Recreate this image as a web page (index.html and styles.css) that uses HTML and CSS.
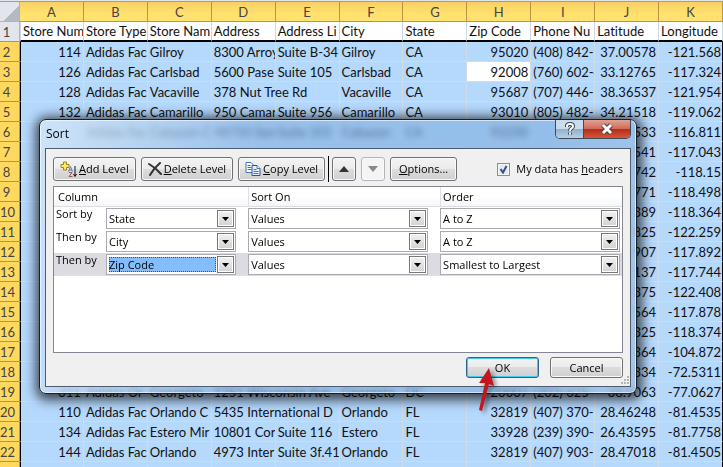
FILE: index.html
```html
<!DOCTYPE html>
<html lang="en">
<head>
    <meta charset="UTF-8">
    <meta name="viewport" content="width=device-width, initial-scale=1.0">
    <title>Sort</title>
    <link rel="stylesheet" href="styles.css">
</head>
<body>
    <table class="sheet">
        <thead>
            <tr>
                <th class="corner"></th>
                <th>A</th><th>B</th><th>C</th><th>D</th><th>E</th><th>F</th><th>G</th><th>H</th><th>I</th><th>J</th><th>K</th>
            </tr>
        </thead>
        <tbody>
            <tr class="titles"><th>1</th><td>Store Num</td><td>Store Type</td><td>Store Nam</td><td>Address</td><td>Address Li</td><td>City</td><td>State</td><td>Zip Code</td><td>Phone Nu</td><td>Latitude</td><td>Longitude</td></tr>
            <tr><th>2</th><td class="num">114</td><td>Adidas Fac</td><td>Gilroy</td><td>8300 Arroy</td><td>Suite B-34</td><td>Gilroy</td><td>CA</td><td class="num">95020</td><td>(408) 842-9</td><td class="num">37.00578</td><td class="num">-121.568</td></tr>
            <tr><th>3</th><td class="num">126</td><td>Adidas Fac</td><td>Carlsbad</td><td>5600 Pase</td><td>Suite 105</td><td>Carlsbad</td><td>CA</td><td class="num current">92008</td><td>(760) 602-4</td><td class="num">33.12765</td><td class="num">-117.324</td></tr>
            <tr><th>4</th><td class="num">128</td><td>Adidas Fac</td><td>Vacaville</td><td colspan="2">378 Nut Tree Rd</td><td>Vacaville</td><td>CA</td><td class="num">95687</td><td>(707) 446-</td><td class="num">38.36537</td><td class="num">-121.954</td></tr>
            <tr><th>5</th><td class="num">132</td><td>Adidas Fac</td><td>Camarillo</td><td>950 Camar</td><td>Suite 956</td><td>Camarillo</td><td>CA</td><td class="num">93010</td><td>(805) 482-</td><td class="num">34.21518</td><td class="num">-119.062</td></tr>
            <tr><th>6</th><td></td><td>Adidas Fac</td><td>Cabazon C</td><td>48750 Sem</td><td>Suite 101</td><td>Cabazon</td><td>CA</td><td class="num">92230</td><td></td><td class="num">533</td><td class="num">-116.811</td></tr>
            <tr><th>7</th><td colspan="9"></td><td class="num">541</td><td class="num">-117.043</td></tr>
            <tr><th>8</th><td colspan="9"></td><td class="num">742</td><td class="num">-118.15</td></tr>
            <tr><th>9</th><td colspan="9"></td><td class="num">771</td><td class="num">-118.498</td></tr>
            <tr><th>10</th><td colspan="9"></td><td class="num">389</td><td class="num">-118.364</td></tr>
            <tr><th>11</th><td colspan="9"></td><td class="num">825</td><td class="num">-122.259</td></tr>
            <tr><th>12</th><td colspan="9"></td><td class="num">907</td><td class="num">-117.892</td></tr>
            <tr><th>13</th><td colspan="9"></td><td class="num">137</td><td class="num">-117.744</td></tr>
            <tr><th>14</th><td colspan="9"></td><td class="num">375</td><td class="num">-122.408</td></tr>
            <tr><th>15</th><td colspan="9"></td><td class="num">564</td><td class="num">-117.878</td></tr>
            <tr><th>16</th><td colspan="9"></td><td class="num">325</td><td class="num">-118.374</td></tr>
            <tr><th>17</th><td colspan="9"></td><td class="num">364</td><td class="num">-104.872</td></tr>
            <tr><th>18</th><td colspan="9"></td><td class="num">334</td><td class="num">-72.5311</td></tr>
            <tr><th>19</th><td class="num">311</td><td>Adidas Or</td><td>Georgeto</td><td colspan="2">1251 Wisconsin Ave</td><td>Georgeto</td><td>DC</td><td class="num">20007</td><td>(202) 625-</td><td class="num">38.9063</td><td class="num">-77.0627</td></tr>
            <tr><th>20</th><td class="num">110</td><td>Adidas Fac</td><td>Orlando C</td><td colspan="2">5435 International D</td><td>Orlando</td><td>FL</td><td class="num">32819</td><td>(407) 370-9</td><td class="num">28.46248</td><td class="num">-81.4535</td></tr>
            <tr><th>21</th><td class="num">134</td><td>Adidas Fac</td><td>Estero Mir</td><td>10801 Corl</td><td>Suite 116</td><td>Estero</td><td>FL</td><td class="num">33928</td><td>(239) 390-4</td><td class="num">26.43595</td><td class="num">-81.7758</td></tr>
            <tr><th>22</th><td class="num">144</td><td>Adidas Fac</td><td>Orlando</td><td>4973 Inter</td><td>Suite 3f.41</td><td>Orlando</td><td>FL</td><td class="num">32819</td><td>(407) 903-7</td><td class="num">28.47018</td><td class="num">-81.4505</td></tr>
            <tr><th></th><td></td><td></td><td></td><td></td><td></td><td></td><td></td><td></td><td></td><td></td><td></td></tr>
        </tbody>
    </table>

    <form class="dialog" role="dialog" aria-labelledby="dialog-title">
        <div class="titlebar">
            <span id="dialog-title">Sort</span>
            <div class="window-buttons">
                <button type="button" class="help" aria-label="Help">
                    <svg width="14" height="14" viewBox="0 0 14 14" fill="none">
                        <path d="M4 5V4q0-2 3-2t3 2.200q0 1.300-1.500 2.200T7 9M7 10.500v2" stroke="#3b4654" stroke-width="4"/>
                        <path d="M4 5V4q0-2 3-2t3 2.200q0 1.300-1.500 2.200T7 9M7 10.500v2" stroke="#fff" stroke-width="2"/>
                    </svg>
                </button>
                <button type="button" class="close" aria-label="Close">
                    <svg width="14" height="12" viewBox="0 0 14 12" fill="none">
                        <path d="M3 2l8 8M11 2l-8 8" stroke="#5b3a3c" stroke-width="5"/>
                        <path d="M3 2l8 8M11 2l-8 8" stroke="#fff" stroke-width="3"/>
                    </svg>
                </button>
            </div>
        </div>

        <div class="content">
            <div class="toolbar">
                <button type="button" class="btn">
                    <svg width="17" height="17" viewBox="0 0 17 17" fill="none">
                        <path d="M3.500 1h3v2.500H9v3H6.500V9h-3V6.500H1v-3h2.500z" fill="#ffe95a" stroke="#9a8422"/>
                        <path d="M8.500 10.500l2-5 2 5M9 9h3" stroke="#5a7dbb"/>
                        <path d="M9 11.500h3l-3 4h3.500" stroke="#9a5560"/>
                        <path d="M15 5v10M13.500 13l1.500 2.500 1.500-2.500" stroke="#111"/>
                    </svg>
                    <span><u>A</u>dd Level</span>
                </button>
                <button type="button" class="btn">
                    <svg width="14" height="14" viewBox="0 0 14 14" fill="none" stroke="#333" stroke-linecap="round">
                        <path d="M1 2q7 4 12 10" stroke-width="2"/>
                        <path d="M12 1Q6 6 2 13" stroke-width="2"/>
                    </svg>
                    <span><u>D</u>elete Level</span>
                </button>
                <button type="button" class="btn">
                    <svg width="16" height="14" viewBox="0 0 16 14" fill="#fff" stroke="#4a74b8">
                        <path d="M1 .5h5l2.500 2.500v7.500H1z"/>
                        <path d="M2.500 3.500h3M2.500 5.500h4M2.500 7.500h4"/>
                        <path d="M7 3.500h5l3 3v7H7z" fill="#e6f0ff" stroke="#28549c"/>
                        <path d="M12 3.500v3h3M8.500 7.500h3M8.500 9.500h5M8.500 11.500h5"/>
                    </svg>
                    <span><u>C</u>opy Level</span>
                </button>
                <span class="separator"></span>
                <button type="button" class="btn move" aria-label="Move Up">
                    <svg width="10" height="6" viewBox="0 0 10 6"><path d="M5 0l5 6H0z" fill="#333"/></svg>
                </button>
                <button type="button" class="btn move" aria-label="Move Down" disabled>
                    <svg width="10" height="6" viewBox="0 0 10 6"><path d="M5 6l5-6H0z" fill="#888"/></svg>
                </button>
                <button type="button" class="btn options"><span><u>O</u>ptions...</span></button>
                <label class="headers"><input type="checkbox" checked> <span>My data has <u>h</u>eaders</span></label>
            </div>

            <div class="levels">
                <div class="level-head">
                    <span class="first">Column</span>
                    <span>Sort On</span>
                    <span>Order</span>
                </div>
                <div class="level">
                    <label for="column1">Sort by</label>
                    <div class="combo"><select id="column1"><option>State</option></select></div>
                    <div class="combo"><select aria-label="Sort On"><option>Values</option></select></div>
                    <div class="combo"><select aria-label="Order"><option>A to Z</option></select></div>
                </div>
                <div class="level">
                    <label for="column2">Then by</label>
                    <div class="combo"><select id="column2"><option>City</option></select></div>
                    <div class="combo"><select aria-label="Sort On"><option>Values</option></select></div>
                    <div class="combo"><select aria-label="Order"><option>A to Z</option></select></div>
                </div>
                <div class="level selected">
                    <label for="column3">Then by</label>
                    <div class="combo active"><select id="column3"><option>Zip Code</option></select></div>
                    <div class="combo"><select aria-label="Sort On"><option>Values</option></select></div>
                    <div class="combo"><select aria-label="Order"><option>Smallest to Largest</option></select></div>
                </div>
            </div>

            <div class="footer">
                <button type="submit" class="btn ok">OK
                    <svg class="pointer" width="30" height="50" viewBox="0 0 30 50">
                        <path d="M18 2l5 18-5-2-7 27-3-1 6-27-6 0z" fill="#c4161c"/>
                    </svg>
                </button>
                <button type="button" class="btn">Cancel</button>
            </div>
            <svg class="grip" width="9" height="9" viewBox="0 0 9 9" fill="#b4b4b4">
                <path d="M7 0h2v2H7zM7 3h2v2H7zM7 6h2v2H7zM4 3h2v2H4zM4 6h2v2H4zM1 6h2v2H1z"/>
            </svg>
        </div>
    </form>
</body>
</html>
```

FILE: styles.css
```css
* {
    box-sizing: border-box;
}

body {
    margin: 0;
    padding-top: 1px;
    height: 100vh;
    overflow: hidden;
    position: relative;
    background-color: #e3e7ec;
}

/* spreadsheet */
.sheet {
    width: 100%;
    table-layout: fixed;
    border-collapse: separate;
    border-spacing: 0;
    border-top: 1px solid #9a9da3;
    font-family: Lato, Calibri, sans-serif;
    font-size: 13px;
    font-variant-ligatures: none;
    line-height: 18px;
    color: #111;
}

.sheet th,
.sheet td {
    height: 20px;
    padding: 1px 0 0;
    overflow: hidden;
    white-space: nowrap;
}

.sheet th {
    font-weight: normal;
    color: #444;
    border-right: 1px solid #bf9440;
    border-bottom: 1px solid #bf9440;
}

.sheet thead th {
    background: linear-gradient(#fbd062, #ffe070 60%, #ffe26e);
}

.sheet tbody th {
    background-color: #ffd95f;
    padding-right: 6px;
}

.sheet .corner {
    width: 20px;
    background: linear-gradient(135deg, #e2e6ec 60%, #b5bac2 60%);
    border-color: #b0b4ba;
}

.sheet td {
    background-color: #b5d8fd;
    border-right: 1px solid #cfdce6;
    border-bottom: 1px solid #cfdce6;
    padding-left: 2px;
    text-align: left;
}

.sheet th + td {
    border-left: 1px solid #000;
}

.sheet td:last-child {
    border-right-color: #000;
}

.sheet .titles th {
    background-color: #e2e6ec;
    border-right-color: #b0b4ba;
}

.sheet .titles td {
    background-color: #fff;
    border-right-color: #d0d7e5;
    border-bottom: 2px solid #000;
    line-height: 17px;
}

.sheet .titles th + td {
    border-left-color: #d0d7e5;
}

.sheet .num {
    text-align: right;
    padding: 1px 2px 0 0;
}

.sheet td:last-child.num {
    padding-right: 1px;
}

.sheet .current {
    background-color: #fff;
}

/* dialog */
.dialog {
    position: absolute;
    top: 119px;
    left: 39px;
    right: 86px;
    padding: 0 5px 6px;
    border: 1px solid #17202b;
    border-radius: 7px;
    background: linear-gradient(100deg, rgba(212, 230, 247, 0.8), rgba(131, 177, 226, 0.6) 35%, rgba(125, 172, 222, 0.6) 80%, rgba(160, 195, 230, 0.8));
    backdrop-filter: blur(3px);
    box-shadow: inset 0 0 0 1px rgba(255, 255, 255, 0.6), 1px 2px 12px 4px rgba(0, 0, 0, 0.7);
    font-family: "Open Sans", "Segoe UI", Tahoma, sans-serif;
    font-size: 11px;
    line-height: 14px;
    color: #000;
}

.dialog button,
.dialog select {
    font: inherit;
    color: inherit;
}

.titlebar {
    display: flex;
    justify-content: space-between;
    height: 28px;
    padding-left: 1px;
    font-size: 12px;
    line-height: 27px;
}

.window-buttons {
    display: flex;
    height: 19px;
    border: 1px solid #3f4a58;
    border-top: 0;
    border-radius: 0 0 5px 5px;
    overflow: hidden;
}

.window-buttons button {
    display: flex;
    align-items: center;
    justify-content: center;
    padding: 0;
    border: 0;
}

.help {
    width: 27px;
    background: linear-gradient(#c9dcee 48%, #93aecb 50%, #b7d0e8);
}

.window-buttons .close {
    width: 47px;
    border-left: 1px solid #3f4a58;
    background: linear-gradient(#e1a193, #cf6c5a 48%, #b52b17 50%, #d4573a);
}

.content {
    position: relative;
    padding: 8px 7px;
    border: 1px solid #4e5c6e;
    background-color: #f0f0f0;
}

.toolbar {
    display: flex;
    align-items: center;
    gap: 5px;
    height: 24px;
    margin-bottom: 5px;
}

.btn {
    display: flex;
    align-items: center;
    justify-content: center;
    gap: 2px;
    height: 24px;
    padding: 0 6px;
    border: 1px solid #707070;
    border-radius: 3px;
    background: linear-gradient(#f3f3f3, #ebebeb 48%, #dddddd 50%, #cfcfcf);
    box-shadow: inset 0 0 0 1px #fafafa;
    white-space: nowrap;
}

.btn.move {
    width: 24px;
    padding: 0;
}

.btn.options {
    min-width: 67px;
}

.btn:disabled {
    border-color: #b5b5b5;
    background: #f4f4f4;
}

.separator {
    width: 1px;
    height: 26px;
    margin: 0 -2px;
    background-color: #000;
}

.headers {
    display: flex;
    align-items: center;
    gap: 6px;
    margin-left: auto;
    white-space: nowrap;
}

.headers input {
    appearance: none;
    width: 13px;
    height: 13px;
    margin: 0;
    border: 1px solid #8e8f8f;
    background: #e6e9ee;
    box-shadow: inset 0 0 0 1px #f4f4f4;
}

.headers input:checked {
    background: #e6e9ee url("data:image/svg+xml,%3Csvg xmlns='http://www.w3.org/2000/svg' viewBox='0 0 11 11'%3E%3Cpath d='M2.500 5l2.500 3.500L8.500 2' fill='none' stroke='%23354f91' stroke-width='2'/%3E%3C/svg%3E") center / 11px no-repeat;
}

/* sort levels */
.levels {
    height: 167px;
    border: 1px solid #828790;
    background-color: #fff;
}

.level-head,
.level {
    display: grid;
    grid-template-columns: 38px 131fr 181fr 181fr;
    column-gap: 12px;
    padding: 0 2px;
}

.level-head {
    height: 20px;
    line-height: 19px;
    background: linear-gradient(#fff 50%, #f4f5f7);
    border-bottom: 1px solid #dcdde0;
}

.level-head span {
    padding-left: 2px;
    border-left: 1px solid #dfe0e4;
}

.level-head .first {
    grid-column: 1 / 3;
    border-left: 0;
}

.level {
    height: 23px;
    align-items: center;
}

.level label {
    align-self: start;
    white-space: nowrap;
}

.level.selected {
    background-color: #dcdbe2;
}

.combo {
    display: grid;
    grid-template-columns: 1fr 17px;
    height: 21px;
    border: 1px solid #a9a9b1;
    padding: 1px;
    background-color: #fff;
}

.combo select {
    grid-area: 1 / 1 / 2 / 3;
    z-index: 1;
    min-width: 0;
    margin: 0;
    padding: 0 18px 0 1px;
    appearance: none;
    border: 0;
    outline: 0;
    background: none;
}

.combo::after {
    content: "";
    grid-area: 1 / 2;
    border: 1px solid #777;
    box-shadow: inset 0 0 0 1px #fff;
    background: url("data:image/svg+xml,%3Csvg xmlns='http://www.w3.org/2000/svg' width='7' height='4'%3E%3Cpath d='M0 0h7L3.500 4z'/%3E%3C/svg%3E") center no-repeat, linear-gradient(#f2f2f2, #d2d2d2);
}

.combo.active::before {
    content: "";
    grid-area: 1 / 1;
    margin: 1px;
    border: 1px dotted #5c4a2c;
    background-color: #84bdfb;
}

.footer {
    display: flex;
    justify-content: flex-end;
    gap: 11px;
    margin-top: 4px;
}

.footer .btn {
    position: relative;
    width: 73px;
    height: 21px;
}

.footer .ok {
    border-color: #2c628b;
    box-shadow: inset 0 0 0 1px #48c8ee;
}

.pointer {
    position: absolute;
    z-index: 2;
    top: 8px;
    left: 4px;
    filter: drop-shadow(3px 2px 2px rgba(0, 0, 0, 0.4));
}

.grip {
    position: absolute;
    right: 1px;
    bottom: 1px;
}
```
